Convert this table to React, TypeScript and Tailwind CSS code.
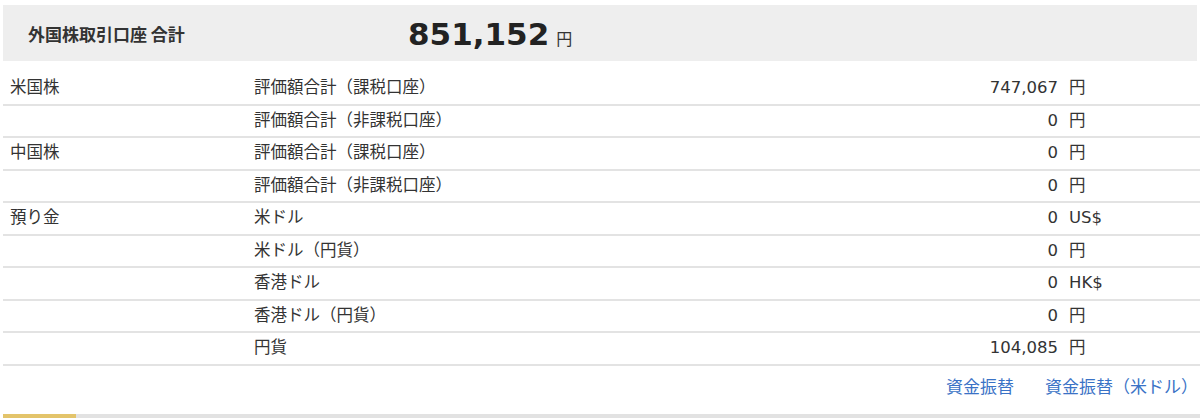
import React from 'react';

interface Row {
    group?: string;
    name: string;
    value: string;
    unit: string;
}

const rows: Row[] = [
    { group: '米国株', name: '評価額合計（課税口座）', value: '747,067', unit: '円' },
    { name: '評価額合計（非課税口座）', value: '0', unit: '円' },
    { group: '中国株', name: '評価額合計（課税口座）', value: '0', unit: '円' },
    { name: '評価額合計（非課税口座）', value: '0', unit: '円' },
    { group: '預り金', name: '米ドル', value: '0', unit: 'US$' },
    { name: '米ドル（円貨）', value: '0', unit: '円' },
    { name: '香港ドル', value: '0', unit: 'HK$' },
    { name: '香港ドル（円貨）', value: '0', unit: '円' },
    { name: '円貨', value: '104,085', unit: '円' },
];

const App: React.FC = () => {
    return (
        <div
            className="w-[1200px] h-[418px] overflow-hidden bg-white text-[#333] pt-[5px] pl-[3px]"
            style={{ fontFamily: '"DejaVu Sans", "Noto Sans CJK JP", sans-serif' }}
        >
            {/* Total */}
            <div className="mr-[3px] h-[56px] bg-[#eeeeee] flex items-center">
                <div className="w-[405px] pl-[25px] pt-[2px] text-[17px] font-bold" style={{ fontFamily: '"Noto Sans CJK JP", sans-serif' }}>
                    外国株取引口座 合計
                </div>
                <div className="flex items-baseline pt-[2px]">
                    <span className="text-[31px] font-bold text-[#222]">851,152</span>
                    <span className="ml-[7px] text-[16px]">円</span>
                </div>
            </div>

            {/* Breakdown */}
            <div className="mt-[12px]">
                {rows.map((row, i) => (
                    <div key={i} className="h-[32.5px] flex items-center border-b-2 border-[#e3e3e3] text-[16.5px] pt-[1px]">
                        <div className="w-[251px] pl-[7px]">{row.group}</div>
                        <div className="flex-1">{row.name}</div>
                        <div className="text-right">{row.value}</div>
                        <div className="w-[142px] pl-[11px]">{row.unit}</div>
                    </div>
                ))}
            </div>

            <div className="h-[45px] flex items-center justify-end gap-[31px] pr-[2px] text-[17px] text-[#3a72c6]">
                <a className="cursor-pointer hover:underline">資金振替</a>
                <a className="cursor-pointer hover:underline">資金振替（米ドル）</a>
            </div>

            <div className="mt-[3px] h-[6px] flex bg-[#e2e2e2]">
                <div className="w-[73px] bg-[#e3c46b]" />
            </div>
        </div>
    );
};

export default App;
